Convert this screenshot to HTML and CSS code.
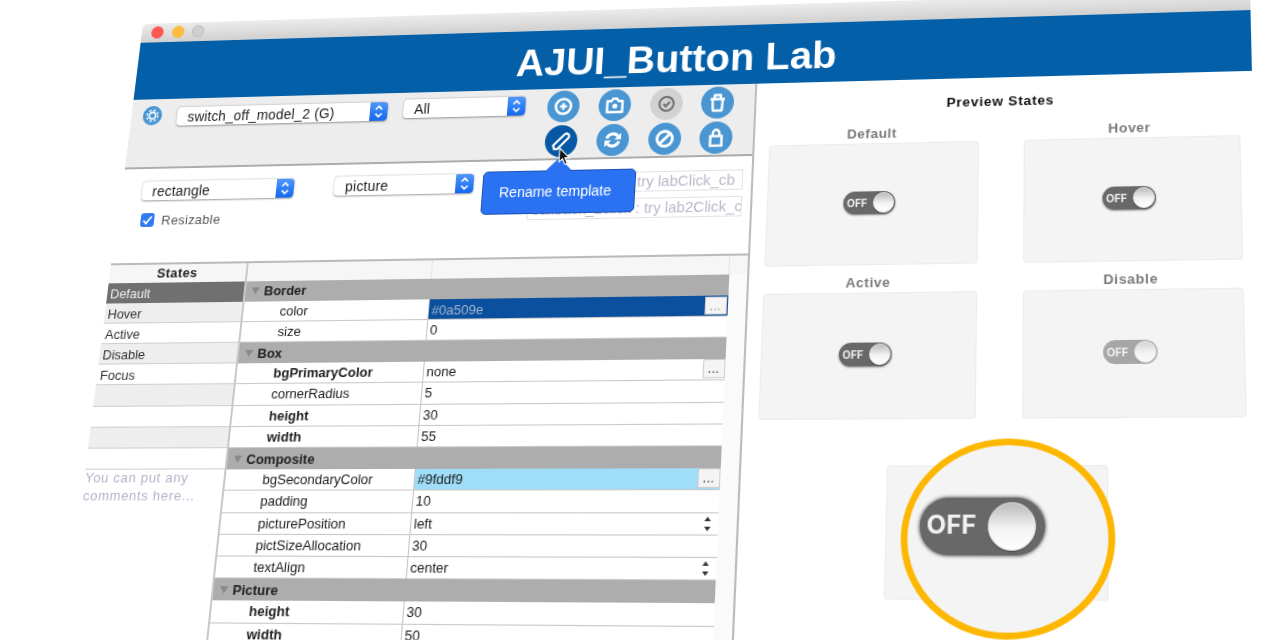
FILE: index.html
```html
<!DOCTYPE html>
<html lang="en">
<head>
<meta charset="utf-8">
<title>AJUI_Button Lab</title>
<link rel="stylesheet" href="styles.css">
</head>
<body>
<main class="window">
  <div class="titlebar">
    <span class="light red"></span><span class="light yellow"></span><span class="light grey"></span>
  </div>
  <header class="banner"><h1>AJUI_Button Lab</h1></header>
  <div class="content">
    <section class="left">
      <div class="toolbar">
        <span class="gear">
          <svg viewBox="0 0 20 20" class="icon"><circle cx="10" cy="10" r="3.500" fill="none" stroke="#fff" stroke-width="1.800"/><circle cx="10" cy="10" r="5.800" fill="none" stroke="#fff" stroke-width="1.400" stroke-dasharray="2.300 2.250"/></svg>
        </span>
        <div class="popup model"><span class="ptext">switch_off_model_2 (G)</span><span class="stepper"><svg viewBox="0 0 14 18" class="icon"><path d="M4 7l3-3 3 3M4 11l3 3 3-3" fill="none" stroke="#fff" stroke-width="1.5"/></svg></span></div>
        <div class="popup all"><span class="ptext">All</span><span class="stepper"><svg viewBox="0 0 14 18" class="icon"><path d="M4 7l3-3 3 3M4 11l3 3 3-3" fill="none" stroke="#fff" stroke-width="1.5"/></svg></span></div>
        <div class="actions">
          <button class="act"><svg viewBox="0 0 32 32" class="icon"><circle cx="16" cy="16" r="7.500" fill="none" stroke="#fff" stroke-width="2.600"/><path d="M16 12.500v7M12.500 16h7" stroke="#fff" stroke-width="2.400"/></svg></button>
          <button class="act"><svg viewBox="0 0 32 32" class="icon"><path d="M8.500 12h4l1.500-2.500h4l1.500 2.500h4v11h-15z" fill="none" stroke="#fff" stroke-width="2.400" stroke-linejoin="round"/><circle cx="16" cy="17" r="2.500" fill="#fff"/></svg></button>
          <button class="act off"><svg viewBox="0 0 32 32" class="icon"><circle cx="16" cy="16" r="7" fill="none" stroke="#707070" stroke-width="2"/><path d="M13 16l2.300 2.500 3.900-4.500" fill="none" stroke="#707070" stroke-width="2"/></svg></button>
          <button class="act"><svg viewBox="0 0 32 32" class="icon"><path d="M9 12.500h14M13 12.500V8.500h6v4M11 12.500l.7 11.500h8.600l.7-11.500" fill="none" stroke="#fff" stroke-width="2.400" stroke-linejoin="round"/></svg></button>
          <button class="act on"><svg viewBox="0 0 32 32" class="icon"><path d="M9.500 24l-1.200-3.800L19 9.500a2.400 2.400 0 0 1 4 3.500L12.500 24z" fill="none" stroke="#fff" stroke-width="2.200" stroke-linejoin="round"/></svg></button>
          <button class="act"><svg viewBox="0 0 32 32" class="icon"><path d="M10 14.500a6.500 6.500 0 0 1 11-2.500" fill="none" stroke="#fff" stroke-width="3"/><path d="M24 9v6.500h-6.500z" fill="#fff"/><path d="M22 17.500a6.500 6.500 0 0 1-11 2.500" fill="none" stroke="#fff" stroke-width="3"/><path d="M8 23v-6.500h6.500z" fill="#fff"/></svg></button>
          <button class="act"><svg viewBox="0 0 32 32" class="icon"><circle cx="16" cy="16" r="7.500" fill="none" stroke="#fff" stroke-width="2.800"/><path d="M11 21l10-10" stroke="#fff" stroke-width="2.800"/></svg></button>
          <button class="act"><svg viewBox="0 0 32 32" class="icon"><rect x="10.500" y="14.500" width="11" height="9.500" fill="none" stroke="#fff" stroke-width="2.400"/><path d="M12.800 14.500v-3a3.200 3.200 0 0 1 6.400 0v3" fill="none" stroke="#fff" stroke-width="2.400"/></svg></button>
        </div>
      </div>
      <div class="form">
        <div class="form-left">
          <div class="popups">
            <div class="popup shape"><span class="ptext">rectangle</span><span class="stepper"><svg viewBox="0 0 14 18" class="icon"><path d="M4 7l3-3 3 3M4 11l3 3 3-3" fill="none" stroke="#fff" stroke-width="1.5"/></svg></span></div>
            <div class="popup kind"><span class="ptext">picture</span><span class="stepper"><svg viewBox="0 0 14 18" class="icon"><path d="M4 7l3-3 3 3M4 11l3 3 3-3" fill="none" stroke="#fff" stroke-width="1.5"/></svg></span></div>
          </div>
          <label class="check"><span class="box"><svg viewBox="0 0 14 14" class="icon"><path d="M3 7.500l2.800 3L11 3.500" fill="none" stroke="#fff" stroke-width="1.800"/></svg></span>Resizable</label>
        </div>
        <div class="inputs">
          <div class="field">callback_click : try labClick_cb</div>
          <div class="field">callback_2click : try lab2Click_cb</div>
        </div>
      </div>
      <div class="tables">
        <div class="states">
          <div class="thead">States</div>
          <div class="srow sel">Default</div>
          <div class="srow alt">Hover</div>
          <div class="srow">Active</div>
          <div class="srow alt">Disable</div>
          <div class="srow">Focus</div>
          <div class="srow alt"></div>
          <div class="srow"></div>
          <div class="srow alt"></div>
          <div class="srow"></div>
          <p class="comment">You can put any<br>comments here...</p>
        </div>
        <div class="props">
          <div class="phead"><span class="pname-head"></span><span class="pval-head"></span></div>
          <div class="group"><i class="tri"></i>Border</div>
          <div class="prow"><span class="name">color</span><span class="val dark">#0a509e<b class="more">...</b></span></div>
          <div class="prow"><span class="name">size</span><span class="val">0</span></div>
          <div class="group"><i class="tri"></i>Box</div>
          <div class="prow"><span class="name bold">bgPrimaryColor</span><span class="val">none<b class="more">...</b></span></div>
          <div class="prow"><span class="name">cornerRadius</span><span class="val">5</span></div>
          <div class="prow"><span class="name bold">height</span><span class="val">30</span></div>
          <div class="prow"><span class="name bold">width</span><span class="val">55</span></div>
          <div class="group"><i class="tri"></i>Composite</div>
          <div class="prow"><span class="name">bgSecondaryColor</span><span class="val light-blue">#9fddf9<b class="more">...</b></span></div>
          <div class="prow"><span class="name">padding</span><span class="val">10</span></div>
          <div class="prow"><span class="name">picturePosition</span><span class="val">left<i class="updown"></i></span></div>
          <div class="prow"><span class="name">pictSizeAllocation</span><span class="val">30</span></div>
          <div class="prow"><span class="name">textAlign</span><span class="val">center<i class="updown"></i></span></div>
          <div class="group"><i class="tri"></i>Picture</div>
          <div class="prow"><span class="name bold">height</span><span class="val">30</span></div>
          <div class="prow"><span class="name bold">width</span><span class="val">50</span></div>
        </div>
      </div>
    </section>
    <section class="preview">
      <h2>Preview States</h2>
      <div class="cards">
        <div class="cell"><h3>Default</h3><div class="card"><span class="toggle"><em>OFF</em><u></u></span></div></div>
        <div class="cell"><h3>Hover</h3><div class="card"><span class="toggle"><em>OFF</em><u></u></span></div></div>
        <div class="cell"><h3>Active</h3><div class="card"><span class="toggle"><em>OFF</em><u></u></span></div></div>
        <div class="cell"><h3>Disable</h3><div class="card"><span class="toggle dim"><em>OFF</em><u></u></span></div></div>
      </div>
      <div class="bigcard">
        <span class="ring"></span>
        <span class="toggle big"><em>OFF</em><u></u></span>
      </div>
    </section>
  </div>
  <div class="tip">Rename template</div>
  <svg class="cursor" viewBox="0 0 12 18"><path d="M1 1v13l3.200-3 2.300 5.500 2.200-1-2.300-5.200H10.500z" fill="#111" stroke="#fff" stroke-width="1"/></svg>
</main>
</body>
</html>
```
FILE: styles.css
```css
* { box-sizing: border-box; }
html, body { margin: 0; height: 100%; background: #fff; overflow: hidden; }
body { font-family: "Liberation Sans", Arial, sans-serif; font-size: 13px; color: #222; }
.window {
  position: absolute; left: 0; top: 0;
  width: 1100px; height: 680px;
  transform-origin: 0 0;
  transform: matrix3d(0.93192,-0.030314,0,-0.00005955, -0.13541,0.93558,0,-0.00012645, 0,0,1,0, 143,24,0,1);
  filter: blur(0.4px);
}
.icon { display: block; width: 100%; height: 100%; }
.titlebar {
  height: 20px; display: flex; align-items: center; gap: 8.500px; padding: 0 0 2px 10px;
  background: linear-gradient(#ececec, #d0d0d0);
  border-radius: 5px 5px 0 0;
}
.light { width: 13px; height: 13px; border-radius: 50%; }
.red { background: #fc5753; }
.yellow { background: #fdbc40; }
.grey { background: #cfcfcf; border: 1px solid #bdbdbd; }
.banner { height: 60px; padding-top: 6px; background: #045fa9; display: flex; align-items: center; justify-content: center; }
h1 { margin: 0; color: #fff; font-size: 39px; font-weight: bold; line-height: 46px; }
.content { display: flex; }
.left { width: 632px; flex: none; border-right: 2px solid #bcbcbc; }
.toolbar {
  height: 72px; background: #ededed; border-bottom: 2px solid #acacac;
  display: flex; align-items: flex-start;
}
.gear { width: 20px; height: 20px; margin: 7.300px 0 0 11.600px; border-radius: 50%; background: #4a96d2; flex: none; }
.popup {
  height: 19px; background: #fff; border-radius: 4px; display: flex; justify-content: space-between;
  box-shadow: 0 0.5px 2px rgba(0,0,0,.4); overflow: hidden; flex: none;
}
.ptext { padding-left: 11px; font-size: 14px; line-height: 21px; color: #222; letter-spacing: .2px; white-space: nowrap; }
.stepper { width: 18px; background: linear-gradient(#4f97fa, #1467ee); flex: none; }
.model { width: 217px; margin: 9px 0 0 16.400px; }
.all { width: 123px; margin: 7.400px 0 0 16px; }
.actions { display: grid; grid-template-columns: repeat(4, 32px); column-gap: 18.600px; row-gap: 3.500px; margin: 1.500px 0 0 22.500px; }
.act { width: 32px; height: 32px; padding: 0; border: 0; border-radius: 50%; background: #4a96d2; }
.act.off { background: #d2d2d2; }
.act.on { background: #0658a4; }
.form { height: 95px; padding: 13.300px 0 0 20.600px; display: flex; }
.form-left { width: 392.400px; flex: none; }
.popups { display: flex; gap: 41px; }
.shape { width: 156.500px; }
.kind { width: 139.500px; margin-top: -1px; }
.check { display: flex; align-items: center; gap: 8px; margin: 12.500px 0 0 2px; font-size: 13px; color: #555; letter-spacing: .4px; }
.box { width: 14px; height: 14px; border-radius: 3px; background: #2f7cf6; flex: none; }
.inputs { width: 209px; display: flex; flex-direction: column; gap: 6px; }
.field {
  height: 20px; padding: 0 0 0 4px; border: 1px solid #e2e2e2; font-size: 14.600px; line-height: 18px;
  color: #bbb6c9; overflow: hidden; white-space: nowrap;
}
.tables { display: flex; margin-left: -2px; border-top: 2px solid #bababa; }
.states { width: 140.500px; flex: none; border-right: 2px solid #c8c8c8; height: 420px; }
.thead { height: 17.500px; background: #f6f6f6; font-weight: bold; font-size: 13px; line-height: 18px; text-align: center; letter-spacing: .4px; color: #222; }
.srow { height: 20.200px; border-bottom: 1px solid #cfcfcf; padding-left: 3px; line-height: 21px; font-size: 13px; color: #333; }
.srow.alt { background: #eeeeee; }
.srow.sel { background: #707070; color: #eee; border-bottom-color: #707070; }
.comment { margin: -1px 0 0; font-size: 13px; line-height: 17px; color: #b6b1c6; letter-spacing: .7px; padding-left: 1px; }
.props { flex: 1; min-width: 0; padding-right: 17.500px; background: #fafafa; height: 420px; }
.phead { display: flex; height: 17.500px; margin-right: -17.500px; background: #f6f6f6; }
.pname-head { width: 185px; border-right: 1px solid #e6e6e6; }
.pval-head { width: 289px; border-right: 1px solid #e6e6e6; }
.group {
  height: 20.200px; background: #adadad; display: flex; align-items: center;
  font-weight: bold; font-size: 13px; color: #222;
}
.tri { width: 0; height: 0; margin: 0 5px 0 6px; border-left: 4.500px solid transparent; border-right: 4.500px solid transparent; border-top: 7px solid #8a8a8a; }
.prow { height: 20.200px; display: flex; background: #fff; border-bottom: 1px solid #c9c9c9; }
.name { width: 185px; flex: none; padding-left: 37px; line-height: 20px; border-right: 1px solid #c4c4c4; }
.bold { font-weight: bold; }
.val { flex: 1; min-width: 0; position: relative; padding-left: 3px; line-height: 20px; display: flex; align-items: flex-start; justify-content: space-between; }
.dark { background: #0a509e; color: #a3b6cf; border: 1px solid #0a509e; padding-left: 2px; }
.light-blue { background: #9fddf9; }
.more {
  width: 21px; height: 18px; background: #f4f4f4; border: 1px solid #cfcfcf; color: #444;
  font-weight: normal; font-size: 13px; line-height: 16px; text-align: center; flex: none;
}
.dark .more { color: #aaa; height: 17px; }
.updown { width: 7px; height: 13px; margin: 3px 6px 0 0; flex: none; position: relative; }
.updown::before, .updown::after { content: ""; position: absolute; left: 0; border-left: 3.500px solid transparent; border-right: 3.500px solid transparent; }
.updown::before { top: 0; border-bottom: 4.500px solid #333; }
.updown::after { bottom: 0; border-top: 4.500px solid #333; }
.preview { flex: 1; min-width: 0; padding: 15px 0 0 14px; }
h2 { margin: 0 3px 13px 0; width: 439px; font-size: 13px; line-height: 17px; text-align: center; font-weight: bold; letter-spacing: .7px; color: #111; }
.cards { display: grid; grid-template-columns: 199.500px 199.500px; column-gap: 42.500px; row-gap: 9px; }
.cell { display: flex; flex-direction: column; gap: 1px; }
h3 { margin: 0; padding-right: 3px; font-size: 13px; line-height: 16px; text-align: center; font-weight: bold; letter-spacing: .5px; color: #7b7b7b; }
.card { height: 118px; padding: 0 4px 3px 0; background: #f4f4f4; border: 1px solid #ececec; border-radius: 3px; display: flex; align-items: center; justify-content: center; }
.toggle {
  position: relative; width: 49px; height: 22px; border-radius: 11px; background: #686868;
  display: flex; align-items: center; justify-content: space-between; padding: 0 1px 0 3px;
  box-shadow: 0 1px 2px rgba(0,0,0,.45);
}
.toggle em { font-family: Inter, sans-serif; font-style: normal; font-weight: 700; font-size: 10px; color: #f0f0f0; }
.toggle u { width: 20px; height: 20px; border-radius: 50%; background: linear-gradient(#bbb, #f3f3f3 55%, #fff); border: 1px solid #e6e6e6; box-shadow: 0 1px 1px rgba(0,0,0,.3); }
.toggle.dim { opacity: .55; box-shadow: none; }
.bigcard {
  position: relative; width: 199px; height: 119px; margin: 42px 0 0 120px;
  background: #f4f4f4; border: 1px solid #ececec; border-radius: 3px; padding: 28px 0 0 30px;
}
.ring { position: absolute; left: 13px; top: -25px; width: 191px; height: 177px; border: 6px solid #fdb701; border-radius: 50%; background: #f4f4f4; }
.toggle.big {
  width: 112px; height: 51px; border-radius: 26px; padding: 0 8px 0 6px;
  box-shadow: 0 0 3px 1px rgba(70,70,70,.7); filter: blur(.6px);
}
.big em { font-size: 23px; margin-top: -4px; }
.big u { width: 43px; height: 43px; }
.tip {
  position: absolute; left: 366.500px; top: 162px; width: 151.500px; height: 42.500px; padding-right: 6px;
  background: #2b72f2; border: 1px solid #1c52b4; border-radius: 5px;
  color: #fff; font-size: 14px; line-height: 40px; text-align: center;
}
.tip::before {
  content: ""; position: absolute; left: 65px; top: -10px; width: 17px; height: 17px;
  background: #2b72f2; transform: rotate(45deg);
}
.cursor { position: absolute; left: 439.500px; top: 139px; width: 13px; height: 19px; }
```
